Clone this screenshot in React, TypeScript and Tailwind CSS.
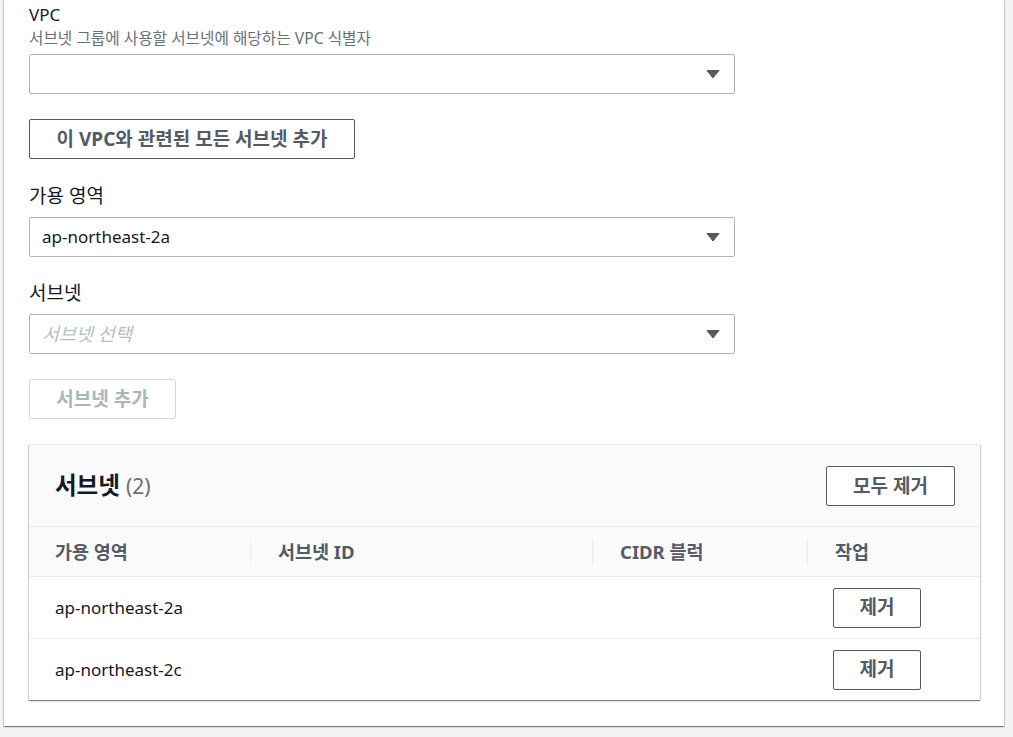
const font = { fontFamily: '"Noto Sans", "Noto Sans CJK KR", sans-serif' };

const Caret = () => (
  <svg width="14" height="10" viewBox="0 0 14 10" className="shrink-0">
    <path d="M1 1.5h12L7 9z" fill="#545b64" stroke="#545b64" strokeWidth="1" strokeLinejoin="round" />
  </svg>
);

const Select = ({ value, placeholder, top }: { value?: string; placeholder?: string; top: string }) => (
  <div className={`${top} flex h-[40px] w-[706px] items-center justify-between rounded-[2px] border border-[#aab7b8] bg-white pl-[12px] pr-[14px]`}>
    {value ? (
      <span className="text-[17px] text-[#16191f]">{value}</span>
    ) : (
      <span className="text-[18.5px] italic text-[#b4bfc0]">{placeholder ?? ''}</span>
    )}
    <Caret />
  </div>
);

const subnets = ['ap-northeast-2a', 'ap-northeast-2c'];
const columns = ['가용 영역', '서브넷 ID', 'CIDR 블럭', '작업'];

export default function App() {
  return (
    <div className="min-h-screen bg-[#f2f3f3]" style={font}>
      <div className="ml-[4px] w-[1000px] bg-white pb-[26px] pl-[25px] pt-[4px] shadow-[0_1px_1px_0_rgba(0,28,36,0.35),1px_1px_1px_0_rgba(0,28,36,0.15),-1px_1px_1px_0_rgba(0,28,36,0.15)]">
        {/* VPC */}
        <div className="text-[17px] leading-[22px] text-[#16191f]">VPC</div>
        <div className="mt-[3px] text-[15.7px] leading-[18px] text-[#687078]">서브넷 그룹에 사용할 서브넷에 해당하는 VPC 식별자</div>
        <Select top="mt-[7px]" />

        <button className="mt-[25px] flex h-[40px] w-[326px] items-center justify-center rounded-[2px] border border-[#545b64] bg-white text-[19px] font-bold text-[#545b64]">
          이 VPC와 관련된 모든 서브넷 추가
        </button>

        {/* AZ */}
        <div className="mt-[26px] text-[19px] leading-[22px] text-[#16191f]">가용 영역</div>
        <Select top="mt-[10px]" value="ap-northeast-2a" />

        {/* Subnet */}
        <div className="mt-[25px] text-[19px] leading-[22px] text-[#16191f]">서브넷</div>
        <Select top="mt-[10px]" placeholder="서브넷 선택" />

        <button className="mt-[25px] flex h-[40px] w-[147px] items-center justify-center rounded-[2px] border border-[#d5dbdb] bg-white text-[19px] font-bold text-[#aab7b8]">
          서브넷 추가
        </button>

        {/* Subnets table */}
        <div className="mt-[25px] w-[951px] border-t border-[#eaeded] bg-white shadow-[0_1px_1px_0_rgba(0,28,36,0.35),1px_1px_1px_0_rgba(0,28,36,0.15),-1px_1px_1px_0_rgba(0,28,36,0.15)]">
          <div className="bg-[#fafafa]">
            <div className="flex h-[81px] items-center justify-between pl-[26px] pr-[25px]">
              <div className="text-[23.5px] font-bold leading-[30px] text-[#16191f]">
                서브넷 <span className="text-[21px] font-normal text-[#687078]">(2)</span>
              </div>
              <button className="mt-[1px] flex h-[40px] w-[129px] items-center justify-center rounded-[2px] border border-[#545b64] bg-white text-[19px] font-bold text-[#545b64]">
                모두 제거
              </button>
            </div>
            <div className="grid h-[50px] grid-cols-[221px_342px_215px_1fr] border-t border-[#eaeded]">
              {columns.map((c, i) => (
                <div key={c} className="flex items-center">
                  {i > 0 && <div className="h-[24px] w-px bg-[#eaeded]" />}
                  <span className={`text-[18.5px] font-bold text-[#545b64] ${i === 0 ? 'pl-[26px]' : 'pl-[27px]'}`}>{c}</span>
                </div>
              ))}
            </div>
          </div>
          {subnets.map((s) => (
            <div key={s} className="grid h-[62px] grid-cols-[221px_342px_215px_1fr] border-t border-[#eaeded]">
              <div className="flex items-center pl-[26px] text-[17px] text-[#16191f]">{s}</div>
              <div />
              <div />
              <div className="flex items-center pl-[26px]">
                <button className="flex h-[40px] w-[88px] items-center justify-center rounded-[2px] border border-[#545b64] bg-white text-[19px] font-bold text-[#545b64]">
                  제거
                </button>
              </div>
            </div>
          ))}
        </div>
      </div>
    </div>
  );
}
